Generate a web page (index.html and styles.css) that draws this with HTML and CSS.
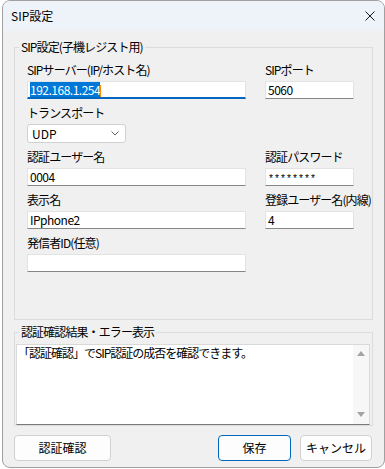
FILE: index.html
```html
<!DOCTYPE html>
<html>
<head>
    <meta charset="utf-8">
    <title>SIP設定</title>
    <link rel="stylesheet" href="styles.css">
</head>
<body>
    <div class="window">
        <div class="titlebar">
            <span class="title">SIP設定</span>
            <svg class="close" width="10" height="10" viewBox="0 0 10 10"><path d="M0.5 0.5L9.5 9.5M9.5 0.5L0.5 9.5" stroke="#1b1b1b" stroke-width="1"/></svg>
        </div>
        <div class="content">
            <fieldset class="group">
                <legend>SIP設定(子機レジスト用)</legend>
                <div class="fields">
                    <div class="field">
                        <label>SIPサーバー(IP/ホスト名)</label>
                        <div class="input focused"><span class="selected">192.168.1.254</span><span class="caret"></span></div>
                    </div>
                    <div class="field">
                        <label>SIPポート</label>
                        <div class="input">5060</div>
                    </div>
                    <div class="field">
                        <label>トランスポート</label>
                        <div class="select">
                            <span>UDP</span>
                            <svg width="8" height="5" viewBox="0 0 8 5"><path d="M0.5 0.5L4 4L7.5 0.5" fill="none" stroke="#606060" stroke-width="1"/></svg>
                        </div>
                    </div>
                    <div></div>
                    <div class="field">
                        <label>認証ユーザー名</label>
                        <div class="input">0004</div>
                    </div>
                    <div class="field">
                        <label>認証パスワード</label>
                        <div class="input password">********</div>
                    </div>
                    <div class="field">
                        <label>表示名</label>
                        <div class="input">IPphone2</div>
                    </div>
                    <div class="field">
                        <label>登録ユーザー名(内線)</label>
                        <div class="input">4</div>
                    </div>
                    <div class="field">
                        <label>発信者ID(任意)</label>
                        <div class="input"></div>
                    </div>
                </div>
            </fieldset>

            <fieldset class="group result">
                <legend>認証確認結果・エラー表示</legend>
                <div class="memo">
                    <div class="memo-text">「認証確認」でSIP認証の成否を確認できます。</div>
                    <div class="scrollbar">
                        <span class="arrow up"></span>
                        <span class="arrow down"></span>
                    </div>
                </div>
            </fieldset>

            <div class="buttons">
                <button class="verify">認証確認</button>
                <button class="save">保存</button>
                <button class="cancel">キャンセル</button>
            </div>
        </div>
    </div>
</body>
</html>
```

FILE: styles.css
```css
body { margin: 0; background: #fff; font-family: "Noto Sans CJK JP", sans-serif; font-size: 12px; color: #000; }
.window { margin-left: 2px; width: 381px; height: 466px; border: 1px solid #a0a0a0; border-radius: 8px; background: #f0f0f0; overflow: hidden; }

.titlebar { height: 30px; display: flex; align-items: center; justify-content: space-between; padding: 0 9px 0 8px; background: #eef2f9; }
.title { line-height: 14px; }

.content { padding: 0 11px; }
.group { margin: 9px 0 0; padding: 0; border: 1px solid #dcdcdc; }
.group legend { margin-left: 4px; padding: 0 2px; line-height: 14px; letter-spacing: -0.9px; }

.fields { display: grid; grid-template-columns: 219px 89px; column-gap: 19px; row-gap: 7px; padding: 9px 12px 47px; }
.field { display: flex; flex-direction: column; }
.field label { line-height: 14px; margin-bottom: 4px; white-space: nowrap; letter-spacing: -0.9px; }

.input { height: 18px; box-sizing: border-box; border: 1px solid #e3e3e3; border-bottom-color: #868686; background: #fff; padding: 0 2px; line-height: 16px; font-size: 12px; letter-spacing: -0.5px; white-space: nowrap; overflow: hidden; }
.input.focused { border-bottom: 2px solid #0067c0; line-height: 15px; }
.input.password { font-family: "Liberation Mono", monospace; font-size: 10px; letter-spacing: 0; line-height: 22px; }
.selected { background: #0078d7; color: #fff; padding: 1px 0; }
.caret { display: inline-block; width: 1px; height: 12px; background: #ff8c00; vertical-align: -2px; }

.select { height: 19px; width: 99px; box-sizing: border-box; border: 1px solid #d0d0d0; border-radius: 3px; background: #fff; display: flex; align-items: center; justify-content: space-between; padding: 0 6px 0 4px; line-height: 16px; }

.result { margin-top: 5px; }
.memo { display: flex; height: 81px; box-sizing: border-box; margin: 5px 2px 0 1px; border: 1px solid #d9d9d9; border-bottom-color: #7a7a7a; background: #fff; }
.memo-text { flex: 1; padding: 1px 0 0 1px; line-height: 14px; letter-spacing: -1px; }
.scrollbar { width: 16px; background: #f7f7f7; display: flex; flex-direction: column; justify-content: space-between; align-items: center; padding: 6px 0 7px; }
.arrow { width: 0; height: 0; border-left: 4px solid transparent; border-right: 4px solid transparent; }
.arrow.up { border-bottom: 5px solid #a3a3a3; }
.arrow.down { border-top: 5px solid #a3a3a3; }

.buttons { display: flex; gap: 9px; margin: 9px 1px 0 0; }
.buttons button { height: 26px; padding: 0; font: inherit; line-height: 14px; color: #000; border: 1px solid #d1d1d1; border-radius: 4px; background: #fdfdfd; }
.verify { width: 97px; margin-right: auto; }
.save { width: 73px; border-color: #0067c0 !important; }
.cancel { width: 72px; }
```
